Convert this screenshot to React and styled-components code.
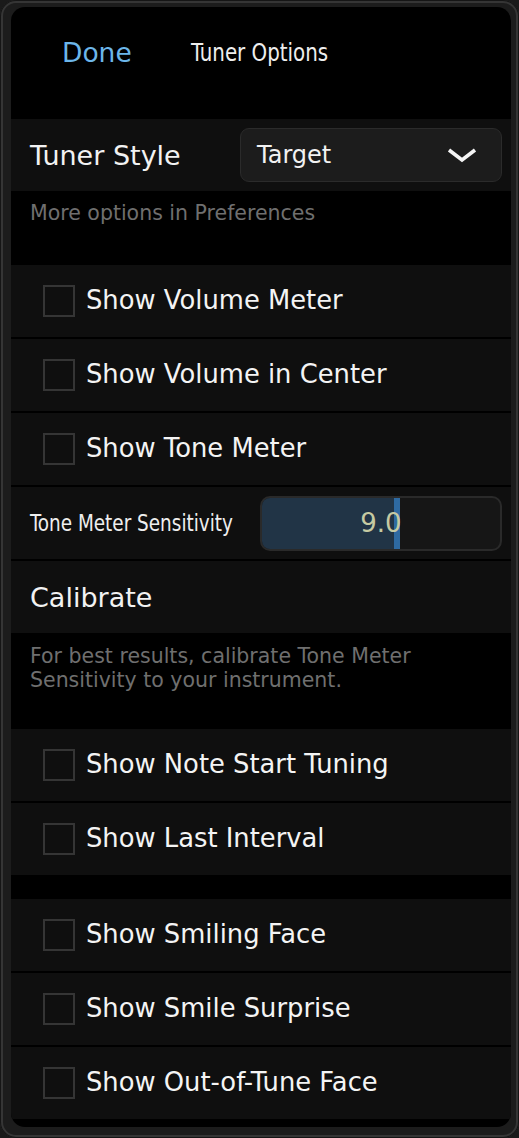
import React from "react";
import styled, { createGlobalStyle } from "styled-components";

const GlobalStyle = createGlobalStyle`
  html, body {
    margin: 0;
    padding: 0;
    background: #1a1a1a;
  }
  body {
    font-family: "DejaVu Sans", Verdana, sans-serif;
    color: #f2f2f2;
  }
`;

const Frame = styled.div`
  width: 519px;
  height: 1138px;
  box-sizing: border-box;
  padding: 7px 8px 11px 11px;
  background: #1c1c1c;
  border-radius: 16px;
  box-shadow: inset 0 0 0 1px #151515, inset 0 0 0 3px #353535;
  overflow: hidden;
`;

const Panel = styled.div`
  height: 100%;
  background: #000;
  border-radius: 14px;
  overflow: hidden;
  display: flex;
  flex-direction: column;
`;

const Header = styled.div`
  height: 112px;
  box-sizing: border-box;
  padding: 30px 0 0 51px;
  display: flex;
  align-items: flex-start;
  gap: 59px;
`;

const DoneButton = styled.span`
  font-size: 26.5px;
  line-height: 32px;
  color: #6cb6ea;
  cursor: pointer;
`;

// narrow title text, the app uses a compressed face
const Narrow = styled.span`
  display: inline-block;
  font-family: "DejaVu Sans Condensed", "DejaVu Sans", sans-serif;
  font-size: ${(p) => p.size}px;
  line-height: 32px;
  color: #eeeeee;
  transform: scaleX(${(p) => p.squeeze});
  transform-origin: left center;
  white-space: nowrap;
`;

const Group = styled.div`
  display: flex;
  flex-direction: column;
  gap: 2px;
`;

const Row = styled.div`
  height: 72px;
  flex-shrink: 0;
  box-sizing: border-box;
  background: #0f0f0f;
  display: flex;
  align-items: center;
  padding: ${(p) => (p.check ? "0 0 0 32px" : "0 9px 0 19px")};
  justify-content: ${(p) => (p.spread ? "space-between" : "flex-start")};
`;

const Label = styled.span`
  font-size: 27px;
  line-height: 1;
  color: #f2f2f2;
`;

const Note = styled.div`
  height: ${(p) => p.h}px;
  flex-shrink: 0;
  box-sizing: border-box;
  padding: ${(p) => p.pt}px 19px 0 19px;
  font-size: 20.5px;
  line-height: 24px;
  color: #6f6f6f;
`;

const Gap = styled.div`
  height: ${(p) => p.h}px;
  flex-shrink: 0;
`;

const Select = styled.div`
  width: 262px;
  height: 54px;
  box-sizing: border-box;
  border: 1.5px solid #2b2b2b;
  border-radius: 9px;
  background: #1c1c1c;
  display: flex;
  align-items: center;
  justify-content: space-between;
  padding: 0 24px 0 16px;
  font-size: 24px;
  color: #f2f2f2;
`;

const CheckBox = styled.span`
  width: 32px;
  height: 32px;
  box-sizing: border-box;
  border: 2px solid #353535;
  flex-shrink: 0;
  margin-right: 11px;
`;

const CheckLabel = styled.span`
  font-size: 25.8px;
  line-height: 1;
  color: #f4f4f4;
  white-space: nowrap;
`;

const Slider = styled.div`
  position: relative;
  width: 242px;
  height: 55px;
  flex-shrink: 0;
  box-sizing: border-box;
  border: 2px solid #2a2a2a;
  border-radius: 10px;
  background: #161616;
  overflow: hidden;
  display: flex;
  align-items: center;
  justify-content: center;
`;

const SliderFill = styled.div`
  position: absolute;
  left: 0;
  top: 0;
  bottom: 0;
  background: #213446;
  border-right: 6px solid #2e6aa2;
`;

const SliderValue = styled.span`
  position: relative;
  font-size: 26px;
  color: #c6caa2;
`;

const Chevron = () => (
  <svg width="30" height="16" viewBox="0 0 30 16">
    <polyline
      points="2,3 15,13 28,3"
      fill="none"
      stroke="#f4f4f4"
      strokeWidth="3.6"
      strokeLinejoin="miter"
    />
  </svg>
);

const CheckRow = ({ label }) => (
  <Row check>
    <CheckBox />
    <CheckLabel>{label}</CheckLabel>
  </Row>
);

const sensitivity = { value: 9.0, max: 16.2 };

export default function App() {
  const fill = (sensitivity.value / sensitivity.max) * 100;
  return (
    <>
      <GlobalStyle />
      <Frame>
        <Panel>
          <Header>
            <DoneButton>Done</DoneButton>
            <Narrow size={24.5} squeeze={0.9}>Tuner Options</Narrow>
          </Header>

          <Row spread>
            <Label>Tuner Style</Label>
            <Select>
              <span>Target</span>
              <Chevron />
            </Select>
          </Row>
          <Note h={74} pt={10}>More options in Preferences</Note>

          <Group>
            <CheckRow label="Show Volume Meter" />
            <CheckRow label="Show Volume in Center" />
            <CheckRow label="Show Tone Meter" />
            <Row spread>
              <Narrow size={23} squeeze={0.89}>Tone Meter Sensitivity</Narrow>
              <Slider>
                <SliderFill style={{ width: `${fill}%` }} />
                <SliderValue>{sensitivity.value.toFixed(1)}</SliderValue>
              </Slider>
            </Row>
            <Row>
              <Label>Calibrate</Label>
            </Row>
          </Group>
          <Note h={96} pt={11}>
            For best results, calibrate Tone Meter Sensitivity to your instrument.
          </Note>

          <Group>
            <CheckRow label="Show Note Start Tuning" />
            <CheckRow label="Show Last Interval" />
          </Group>
          <Gap h={24} />

          <Group>
            <CheckRow label="Show Smiling Face" />
            <CheckRow label="Show Smile Surprise" />
            <CheckRow label="Show Out-of-Tune Face" />
          </Group>
        </Panel>
      </Frame>
    </>
  );
}
